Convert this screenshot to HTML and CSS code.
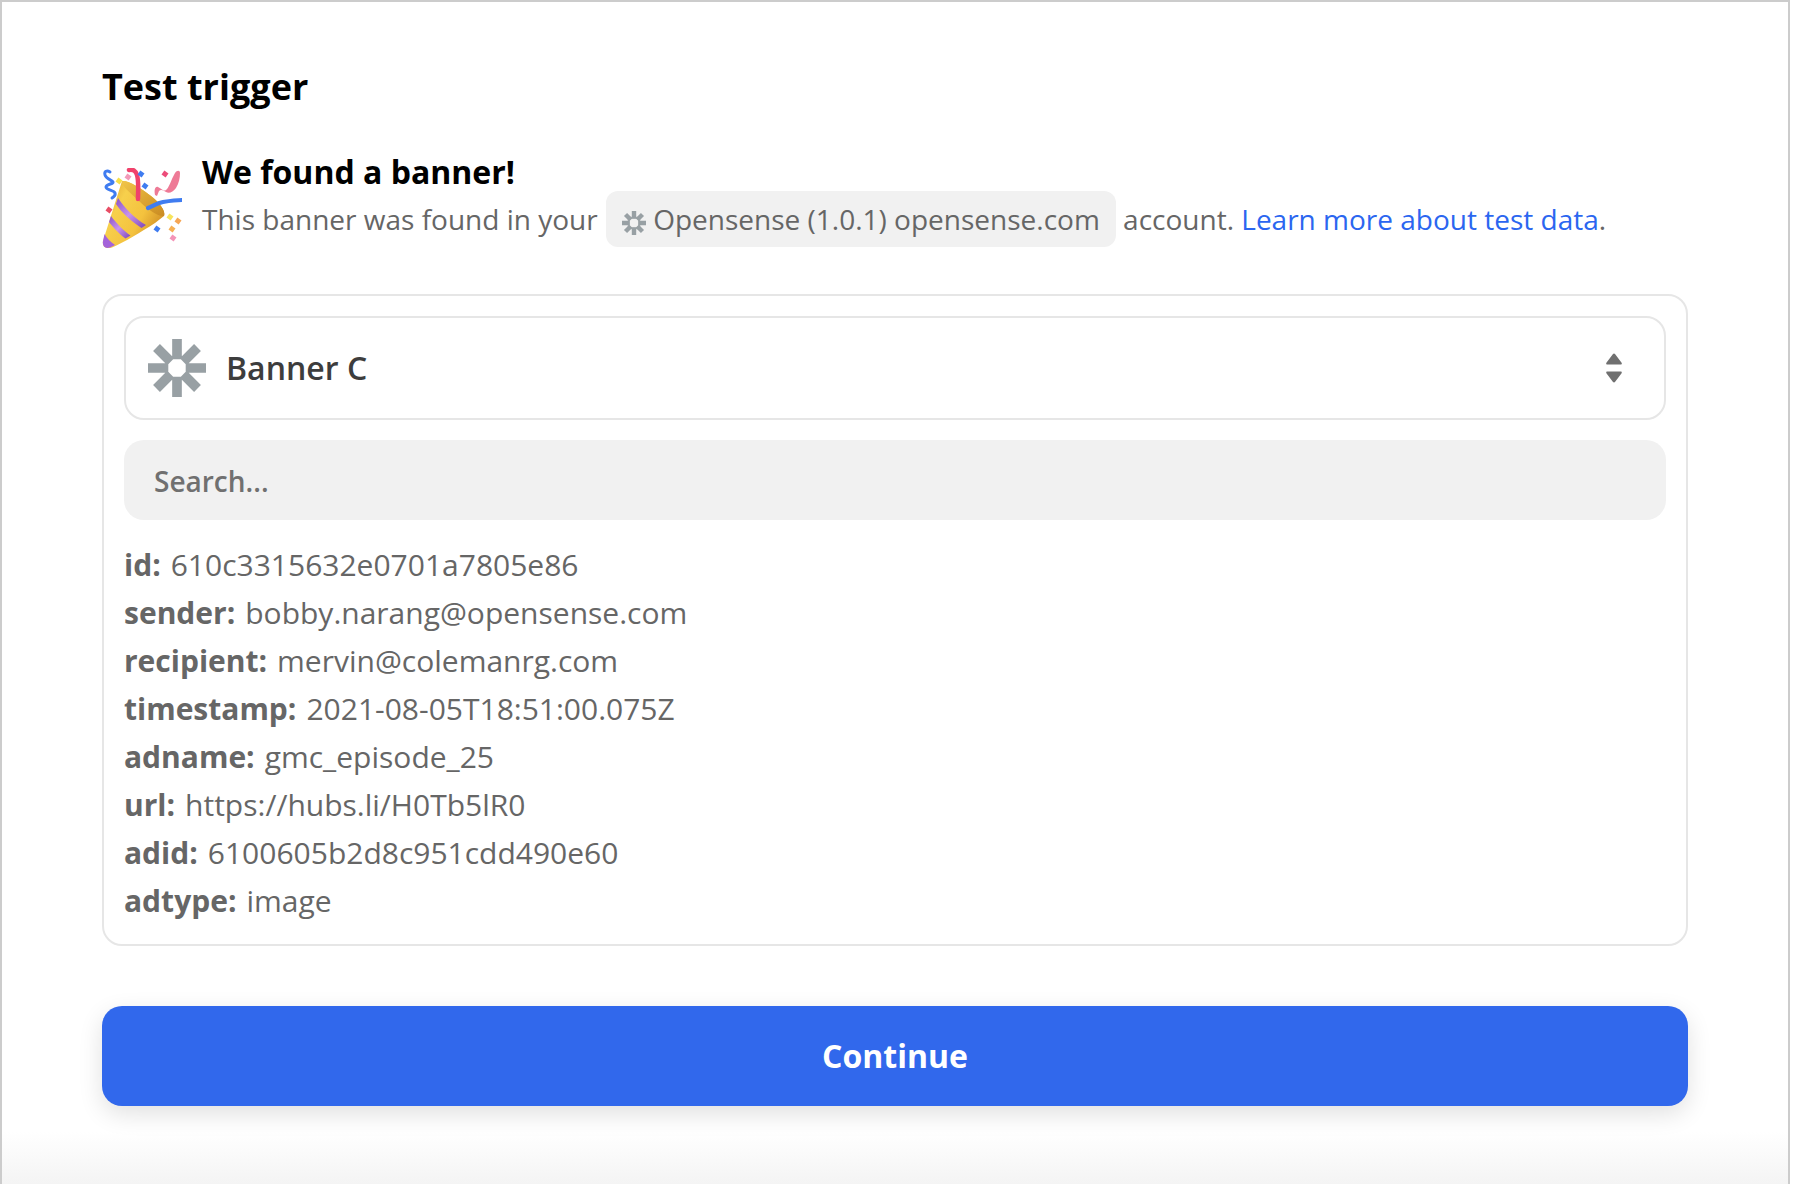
FILE: index.html
```html
<!DOCTYPE html>
<html lang="en">
<head>
<meta charset="utf-8">
<title>Test trigger</title>
<link rel="stylesheet" href="styles.css">
</head>
<body>
<main class="frame">
  <h1 class="title">Test trigger</h1>
  <section class="found">
    <svg class="party" viewBox="7 8 80 80" aria-hidden="true">
      <defs>
        <linearGradient id="cone" x1="0" y1="0" x2="1" y2="0.6">
          <stop offset="0" stop-color="#d9982a"/>
          <stop offset=".35" stop-color="#f7d04c"/>
          <stop offset=".7" stop-color="#f4c23e"/>
          <stop offset="1" stop-color="#d08f26"/>
        </linearGradient>
        <linearGradient id="inner" x1="0" y1="0" x2="1" y2="1">
          <stop offset="0" stop-color="#f0c548"/>
          <stop offset="1" stop-color="#c98a22"/>
        </linearGradient>
        <linearGradient id="stripe" x1="0" y1="0" x2="1" y2="1">
          <stop offset="0" stop-color="#8a52c8"/>
          <stop offset=".5" stop-color="#c892ec"/>
          <stop offset="1" stop-color="#7c46b8"/>
        </linearGradient>
      </defs>
      <path d="M15 12c-3-2-6-1-5 3s7 5 8 7-7 2-7 5 8 3 9 6-1 3-3 5" fill="none" stroke="#3f7cf0" stroke-width="3" stroke-linecap="round"/>
      <path d="M60 35c-1-5 0-9 3-8s5 5 8 3 5-10 9-17c2-3 5-3 5 0 0 5-1 10-4 15-3 4-7 6-10 4s-5-3-7-1l-2 5Z" fill="#ee7a96"/>
      <path d="M27 21 C33 20 46 28 56 36 C64 42 71 51 69 56 L60 63 C46 72 30 82 17 87.500 C11 89.500 7 87 8 81 Z" fill="url(#cone)"/>
      <path d="M27 21 C33 20 46 28 56 36 C64 42 71 51 69 56 C63 57 52 49 44 41 C36 33 26 26 27 21Z" fill="url(#inner)"/>
      <path d="M23 38 C29 47 40 59 51 65 L46.500 68 C36 61 26 52 21 44Z" fill="url(#stripe)"/>
      <path d="M16 56 C21 63 29 71 35.500 75.500 L30.500 78.500 C24 74 18 67 14 62Z" fill="url(#stripe)"/>
      <path d="M9.500 74 C12 78.500 16 82.500 20 85 L15.500 87.300 C10 89.500 7 86 8 81Z" fill="#a463da"/>
      <path d="M34 10c4-1 7 1 8 5 2 7 1 16 1 24" fill="none" stroke="#f0426c" stroke-width="4.500" stroke-linecap="round"/>
      <path d="M53 48c5-2 9-5 15-6 6-1 12-2 19-2" fill="none" stroke="#3f7cf0" stroke-width="4.200" stroke-linecap="round"/>
      <rect x="21.500" y="18.500" width="5" height="5" transform="rotate(35 24 21)" fill="#f6e04a"/>
      <rect x="30.500" y="14.500" width="5" height="5" transform="rotate(35 33 17)" fill="#f39ab8"/>
      <rect x="43.500" y="11.500" width="5" height="5" transform="rotate(35 46 14)" fill="#3f7cf0"/>
      <rect x="47.500" y="23.500" width="5" height="5" transform="rotate(35 50 26)" fill="#3f7cf0"/>
      <rect x="67.500" y="11.500" width="5" height="5" transform="rotate(35 70 14)" fill="#ec4c7a"/>
      <rect x="11.500" y="47.500" width="5" height="5" transform="rotate(35 14 50)" fill="#e84d65"/>
      <rect x="72.500" y="54.500" width="5" height="5" transform="rotate(35 75 57)" fill="#f7e45c"/>
      <rect x="80.500" y="58.500" width="5" height="5" transform="rotate(35 83 61)" fill="#f6a654"/>
      <rect x="74.500" y="66.500" width="5" height="5" transform="rotate(35 77 69)" fill="#f6b054"/>
      <rect x="59.500" y="66.500" width="5" height="5" transform="rotate(35 62 69)" fill="#3f7cf0"/>
      <rect x="75.500" y="75.500" width="5" height="5" transform="rotate(35 78 78)" fill="#f494b8"/>
    </svg>
    <div class="found-text">
      <h2 class="found-title">We found a banner!</h2>
      <p class="found-line">This banner was found in your
        <span class="chip">
          <svg class="gear" viewBox="0 0 60 60" aria-hidden="true"><path d="M30 0V19M30 41V60M0 30H19M41 30H60M8.800 8.800L22 22M38 38L51.200 51.200M51.200 8.800L38 22M22 38L8.800 51.200" fill="none" stroke="#98a0a4" stroke-width="11"/><rect x="17" y="17" width="26" height="26" fill="none" stroke="#98a0a4" stroke-width="5" opacity=".8"/></svg>
          Opensense (1.0.1) opensense.com</span>
        account. <a class="link" href="#">Learn more about test data</a>.</p>
    </div>
  </section>

  <section class="card">
    <div class="select">
      <svg class="logo" viewBox="0 0 60 60" aria-hidden="true"><path d="M30 0V21M30 39V60M0 30H21M39 30H60M8.800 8.800L23.500 23.500M36.500 36.500L51.200 51.200M51.200 8.800L36.500 23.500M23.500 36.500L8.800 51.200" fill="none" stroke="#98a0a4" stroke-width="10"/></svg>
      <span class="select-label">Banner C</span>
      <svg class="arrows" viewBox="0 0 16 30" aria-hidden="true"><path d="M8 0.500c.4 0 .8.200 1 .5l6.600 8.800c.5.700.1 1.700-.8 1.700H1.200c-.9 0-1.300-1-.8-1.700L7 1c.2-.3.600-.5 1-.5Z" fill="#707070"/><path d="M8 29.500c.4 0 .8-.2 1-.5l6.600-8.800c.5-.7.1-1.700-.8-1.700H1.200c-.9 0-1.300 1-.8 1.700L7 29c.2.300.6.500 1 .5Z" fill="#707070"/></svg>
    </div>
    <div class="search">Search...</div>
    <dl class="fields">
      <div class="field"><dt>id:</dt><dd>610c3315632e0701a7805e86</dd></div>
      <div class="field"><dt>sender:</dt><dd>bobby.narang@opensense.com</dd></div>
      <div class="field"><dt>recipient:</dt><dd>mervin@colemanrg.com</dd></div>
      <div class="field"><dt>timestamp:</dt><dd>2021-08-05T18:51:00.075Z</dd></div>
      <div class="field"><dt>adname:</dt><dd>gmc_episode_25</dd></div>
      <div class="field"><dt>url:</dt><dd>https://hubs.li/H0Tb5lR0</dd></div>
      <div class="field"><dt>adid:</dt><dd>6100605b2d8c951cdd490e60</dd></div>
      <div class="field"><dt>adtype:</dt><dd>image</dd></div>
    </dl>
  </section>

  <button class="continue" type="button">Continue</button>
</main>
</body>
</html>
```
FILE: styles.css
```css
* { box-sizing: border-box; }
html, body { margin: 0; height: 100%; }
body {
  background: #fff;
  font-family: "Open Sans", "Liberation Sans", sans-serif;
  color: #666;
}
.frame {
  width: 1790px;
  height: 1184px;
  padding: 61px 100px 0 100px;
  border-top: 2px solid #ccc;
  border-left: 2px solid #ccc;
  border-right: 2px solid #ccc;
  background: linear-gradient(to bottom, #fff 0, #fff 1130px, #f4f4f4 1182px);
}
.title {
  margin: 0;
  font-size: 36px;
  line-height: 48px;
  font-weight: 700;
  color: #000;
}
.found {
  display: flex;
  align-items: flex-start;
  margin-top: 41px;
}
.party { width: 80px; height: 80px; flex: none; margin-top: 16px; }
.found-text { margin-left: 20px; }
.found-title {
  margin: 0;
  font-size: 32px;
  line-height: 39px;
  font-weight: 700;
  color: #000;
}
.found-line {
  margin: 0;
  font-size: 28px;
  line-height: 56px;
  color: #666;
}
.chip {
  display: inline-block;
  height: 56px;
  margin-left: 1px;
  padding: 0 16px;
  border-radius: 12px;
  background: #f1f1f1;
  line-height: 56px;
}
.gear { width: 24px; height: 24px; vertical-align: -5px; }
.link { color: #2b66f0; text-decoration: none; }
.card {
  margin-top: 46px;
  height: 652px;
  padding: 20px 20px 0;
  border: 2px solid #e6e6e6;
  border-radius: 20px;
}
.select {
  display: flex;
  align-items: center;
  height: 104px;
  padding: 0 42px 0 22px;
  border: 2px solid #e6e6e6;
  border-radius: 20px;
}
.logo { width: 58px; height: 58px; flex: none; }
.select-label {
  flex: 1;
  margin-left: 20px;
  padding-bottom: 1px;
  font-size: 32px;
  font-weight: 600;
  color: #3d3d3d;
}
.arrows { width: 16px; height: 30px; flex: none; }
.search {
  display: flex;
  align-items: center;
  height: 80px;
  margin-top: 20px;
  padding-top: 1px;
  padding-left: 30px;
  border-radius: 20px;
  background: #f1f1f1;
  font-size: 28px;
  font-weight: 600;
  color: #707070;
}
.fields { margin: 21px 0 0; }
.field { display: flex; gap: 10px; font-size: 30px; line-height: 48px; }
.field dt { font-weight: 700; }
.field dd { margin: 0; }
.continue {
  display: block;
  width: 100%;
  height: 100px;
  margin-top: 60px;
  padding-bottom: 2px;
  border: 0;
  border-radius: 20px;
  background: #3168ec;
  box-shadow: 0 8px 24px rgba(0,0,0,.12);
  color: #fff;
  font-family: inherit;
  font-size: 32px;
  font-weight: 700;
}
```
